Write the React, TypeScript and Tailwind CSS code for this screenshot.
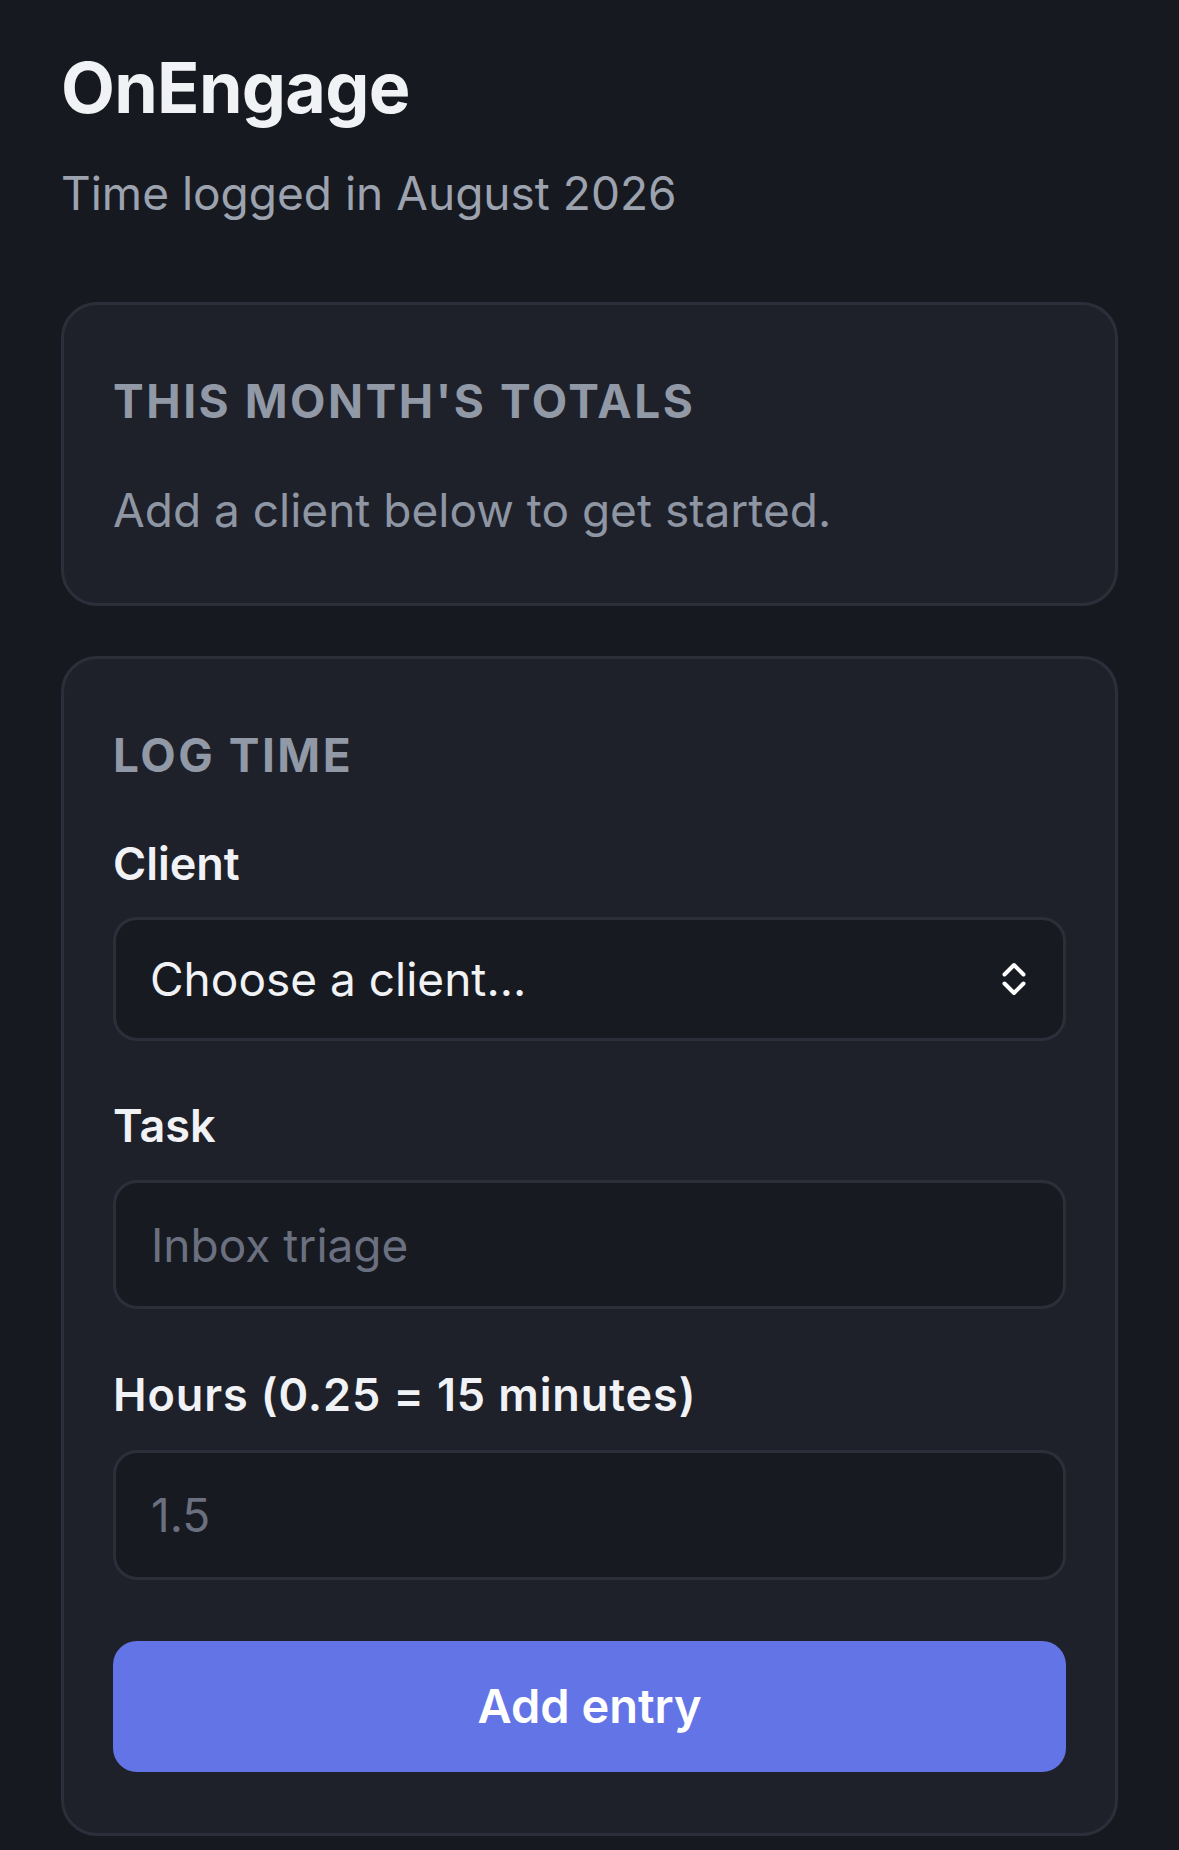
export default function App() {
  return (
    <div className="min-h-screen bg-[#171920] px-[61px] pt-[46px] pb-[16px] font-['Inter',sans-serif] antialiased">
      <h1 className="text-[70px] leading-[84px] font-bold tracking-[-0.01em] text-[#f1f2f5]">OnEngage</h1>
      <p className="mt-[34px] text-[46px] leading-[58px] text-[#9ca3af]">Time logged in August 2026</p>

      <section className="mt-[80px] rounded-[36px] border-[3px] border-[#2c2f3a] bg-[#1f212a] px-[49px] pt-[68px] pb-[65px]">
        <h2 className="text-[46px] leading-[56px] font-bold uppercase tracking-[0.055em] text-[#9198a6]">This month's totals</h2>
        <p className="mt-[53px] text-[46px] leading-[56px] text-[#8e95a3]">Add a client below to get started.</p>
      </section>

      <section className="mt-[50px] rounded-[36px] border-[3px] border-[#2c2f3a] bg-[#1f212a] px-[49px] pt-[68px] pb-[61px]">
        <h2 className="text-[46px] leading-[56px] font-bold uppercase tracking-[0.055em] text-[#9198a6]">Log time</h2>

        <label className="mt-[54px] block">
          <span className="block text-[45px] leading-[54px] font-semibold text-[#f1f2f5]">Client</span>
          <div className="relative mt-[26px]">
            <select
              defaultValue=""
              className="block h-[124px] w-full appearance-none rounded-[24px] border-[3px] border-[#2c2f3a] bg-[#181a21] pl-[34px] pr-[90px] text-[46px] text-[#f1f2f5] outline-none"
            >
              <option value="">Choose a client...</option>
            </select>
            <svg
              className="pointer-events-none absolute right-[39px] top-1/2 -translate-y-1/2"
              width="26"
              height="36"
              viewBox="0 0 26 36"
              fill="none"
              stroke="#ffffff"
              strokeWidth="4"
              strokeLinecap="round"
              strokeLinejoin="round"
            >
              <path d="M3.5 13.5 L13 4 L22.5 13.5" />
              <path d="M3.5 22.5 L13 32 L22.5 22.5" />
            </svg>
          </div>
        </label>

        <label className="mt-[58px] block">
          <span className="block text-[45px] leading-[54px] font-semibold text-[#f1f2f5]">Task</span>
          <input
            type="text"
            placeholder="Inbox triage"
            className="mt-[27px] block h-[129px] w-full rounded-[24px] border-[3px] border-[#2c2f3a] bg-[#181a21] px-[35px] text-[46px] text-[#f1f2f5] outline-none placeholder:text-[#6b7080]"
          />
        </label>

        <label className="mt-[59px] block">
          <span className="block text-[45px] leading-[54px] font-semibold tracking-[0.02em] text-[#f1f2f5]">Hours (0.25 = 15 minutes)</span>
          <input
            type="text"
            inputMode="decimal"
            placeholder="1.5"
            className="mt-[28px] block h-[130px] w-full rounded-[24px] border-[3px] border-[#2c2f3a] bg-[#181a21] px-[35px] text-[46px] text-[#f1f2f5] outline-none placeholder:text-[#6b7080]"
          />
        </label>

        <button
          type="button"
          className="mt-[61px] block h-[131px] w-full rounded-[24px] bg-[#6375e6] text-[47px] font-semibold text-white"
        >
          Add entry
        </button>
      </section>
    </div>
  );
}
